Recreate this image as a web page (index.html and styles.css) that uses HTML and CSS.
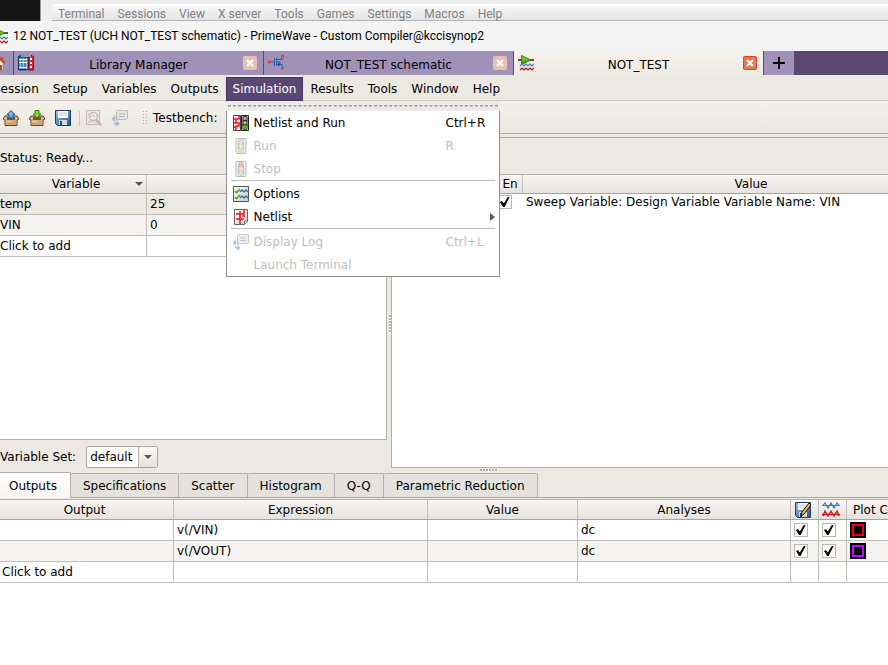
FILE: index.html
```html
<!DOCTYPE html>
<html lang="en">
<head>
<meta charset="utf-8">
<title>12 NOT_TEST (UCH NOT_TEST schematic) - PrimeWave - Custom Compiler@kccisynop2</title>
<link rel="stylesheet" href="styles.css">
</head>
<body>
<svg class="defs" aria-hidden="true">
  <defs>
    <linearGradient id="blue" x1="0" y1="0" x2="1" y2="1"><stop offset="0" stop-color="#9cc6ec"/><stop offset="1" stop-color="#245086"/></linearGradient>
    <linearGradient id="green" x1="0" y1="0" x2="0" y2="1"><stop offset="0" stop-color="#9be04a"/><stop offset="1" stop-color="#3d8a00"/></linearGradient>
    <linearGradient id="page" x1="0" y1="0" x2="1" y2="1"><stop offset="0" stop-color="#fff"/><stop offset="1" stop-color="#c9cbc8"/></linearGradient>
    <symbol id="wave" viewBox="0 0 16 16">
      <path d="M0 5h4M12 5h4" stroke="#222" stroke-width="1.5"/>
      <path d="M3.5 .5v9L13 5z" fill="url(#green)" stroke="#3a7a08"/>
      <path d="M2 11l2-2 2 2 2-2 2 2 2-2 2 2 2-2" fill="none" stroke="#4378ad" stroke-width="1.2"/>
      <path d="M2 15l2-2 2 2 2-2 2 2 2-2 2 2 2-2" fill="none" stroke="#c40d0d" stroke-width="1.2"/>
    </symbol>
    <symbol id="box" viewBox="0 0 16 16">
      <path d="M2 6h12l2 3-2 1v5.5H2V10L0 9z" fill="#d8b487" stroke="#5d4220"/>
      <path d="M4 7h8v3H4z" fill="#76542d"/><path d="M2.500 10.500h11v4h-11z" fill="#cda574"/><path d="M3 11.500h6" stroke="#eed5b3"/>
    </symbol>
    <symbol id="light" viewBox="0 0 16 16">
      <rect x="3" y=".5" width="10" height="15" rx="1" fill="#d6d7cf" stroke="#555"/>
      <rect x="5" y="1.500" width="6" height="13" rx="2" fill="#666"/>
      <circle cx="8" cy="4" r="2" fill="#d7b0a4"/><circle cx="8" cy="8" r="2" fill="#d9c7a2"/><circle cx="8" cy="12" r="2" fill="#bdc7b4"/>
    </symbol>
    <symbol id="log" viewBox="0 0 16 16">
      <path d="M4.500 1.500l1-1h10v8l-1 1h-10z" fill="#d5d8d8" stroke="#777"/>
      <path d="M7 4h6M7 6.500h6" stroke="#4873a8"/>
      <path d="M5 8.500H.8M3 6L.5 8.500 3 11M2 13.500h5M5 10.500v5M3 13l2 2.500 2-2.500" fill="none" stroke="#356fb5" stroke-width="1.3"/>
    </symbol>
    <symbol id="disk" viewBox="0 0 16 16">
      <path d="M.5 .5h15v15h-13l-2-2z" fill="url(#blue)" stroke="#183d68"/>
      <path d="M3 1h10v7H3z" fill="#f6f7f8"/><path d="M4 3h8M4 5h8" stroke="#c8d0d8"/>
      <path d="M4 10h8v5H4z" fill="#d9dadb"/><path d="M5 11h2v4H5z" fill="#254a77"/>
    </symbol>
    <symbol id="close" viewBox="0 0 14 14">
      <rect x=".5" y=".5" width="13" height="13" rx="1" fill="#e07d55" stroke="#d93f2b"/>
      <path d="M4 4l6 6M10 4l-6 6" stroke="#fff" stroke-width="2.200"/>
    </symbol>
    <symbol id="close-dim" viewBox="0 0 14 14">
      <rect x=".5" y=".5" width="13" height="13" rx="1" fill="#e3c1b6" stroke="#f0bcb0"/>
      <path d="M4 4l6 6M10 4l-6 6" stroke="#fff" stroke-width="2.200"/>
    </symbol>
    <symbol id="pulses" viewBox="0 0 18 16">
      <path d="M1 3.500l2-2.500 3 5 3-5 3 5 3-5 2 2.500M0 3.500h18" fill="none" stroke="#417ca3" stroke-width="1.2"/>
      <path d="M1 14l2-5 3 5 3-5 3 5 3-5 2 5M0 12.500h18" fill="none" stroke="#d01919" stroke-width="1.300"/>
    </symbol>
  </defs>
</svg>

<header class="terminal">
  <div class="screen"></div>
  <nav class="terminal-menu">
    <a href="#">Terminal</a><a href="#">Sessions</a><a href="#">View</a><a href="#">X server</a><a href="#">Tools</a><a href="#">Games</a><a href="#">Settings</a><a href="#">Macros</a><a href="#">Help</a>
  </nav>
</header>

<div class="window">
  <div class="title"><svg class="icon"><use href="#wave"/></svg><span>12 NOT_TEST (UCH NOT_TEST schematic) - PrimeWave - Custom Compiler@kccisynop2</span></div>

  <div class="doc-tabs">
    <div class="doc-tab home"><svg class="icon" viewBox="0 0 16 16"><path d="M3 8v7.500h10V8L8 3z" fill="#fff" stroke="#a08878"/><path d="M1 8l7-6 7 6M12 2v4" fill="none" stroke="#d34a22" stroke-width="2.500"/><path d="M9 10h3v5H9z" fill="#9b5532"/></svg></div>
    <div class="doc-tab">
      <svg class="icon" viewBox="0 0 16 16"><path d="M.5 1.500l2-1h8v13l-2 1.500H.5z" fill="#174f78" stroke="#173654"/><path d="M11 1l3-.5 1.500 1.500v13H10z" fill="#d12735" stroke="#6e1620"/><path d="M2.500 3v11M5.500 3v11M8.500 3v11" stroke="#8fc0dd" stroke-width="2"/><path d="M1 4.500h8M1 7.500h8M1 12.500h8" stroke="#fff"/><path d="M3 1h10" stroke="#e8f0f4"/><path d="M13 3v11" stroke="#fff" stroke-width="2" stroke-dasharray="2 2"/></svg>
      <button class="doc-name">Library Manager</button><button class="close" aria-label="Close"><svg><use href="#close-dim"/></svg></button>
    </div>
    <div class="doc-tab">
      <svg class="icon" viewBox="0 0 16 16"><path d="M2 7h4M6.500 3v8M8.500 3v8M9 4.500h5V2M9 9.500h5V13M9 7h3v3" fill="none" stroke="#275f9d"/><path d="M10 7.500l3 2-3 2z" fill="#174f90"/><g fill="#ef9a9a" stroke="#d11717"><circle cx="1.500" cy="7" r="1"/><circle cx="14.500" cy="1.500" r="1"/><circle cx="14.500" cy="13.500" r="1"/></g></svg>
      <button class="doc-name">NOT_TEST schematic</button><button class="close" aria-label="Close"><svg><use href="#close-dim"/></svg></button>
    </div>
    <div class="doc-tab active">
      <svg class="icon"><use href="#wave"/></svg>
      <button class="doc-name">NOT_TEST</button><button class="close" aria-label="Close"><svg><use href="#close"/></svg></button>
    </div>
    <button class="new-tab" aria-label="New tab"><svg viewBox="0 0 12 12"><path d="M6 0v12M0 6h12" stroke="#000" stroke-width="2"/></svg></button>
  </div>

  <nav class="menubar">
    <button>Session</button><button>Setup</button><button>Variables</button><button>Outputs</button>
    <div class="menu-anchor">
      <button class="open">Simulation</button>
      <div class="menu">
        <div class="tear"></div>
        <div class="menu-items">
          <button><svg class="icon" viewBox="0 0 16 16"><path d="M.5 .5h7v15h-7z" fill="#eee" stroke="#444"/><path d="M6 1v3H3v4h3v3H3v4M1 4h2M1 8h2M1 12h2" fill="none" stroke="#e01b24" stroke-width="1.500"/><path d="M8.500 .5h7v15h-7z" fill="#ccc" stroke="#222"/><rect x="9.500" y="1" width="5" height="14" rx="2" fill="#222"/><circle cx="12" cy="3.500" r="1.800" fill="#d99f8b"/><circle cx="12" cy="7.800" r="1.800" fill="#d8b66b"/><circle cx="12" cy="12.200" r="2.200" fill="#45c600"/></svg><span>Netlist and Run</span><kbd>Ctrl+R</kbd></button>
          <button disabled><svg class="icon" viewBox="0 0 16 16"><use href="#light"/><path d="M5 11h6v3H5z" fill="#76cf36"/></svg><span>Run</span><kbd>R</kbd></button>
          <button disabled><svg class="icon" viewBox="0 0 16 16"><use href="#light"/><circle cx="8" cy="3.500" r="2.500" fill="#ec4545"/></svg><span>Stop</span></button>
          <hr>
          <button><svg class="icon" viewBox="0 0 16 16"><path d="M.5 .5h15v15H.5z" fill="url(#page)" stroke="#555"/><path d="M2 5l1.500 1.500L7 3M2 11l1.500 1.500L7 9" fill="none" stroke="#4aa510" stroke-width="1.600"/><path d="M7 6l2-2 2 2 2-2 2 2M7 12l2-2 2 2 2-2 2 2" fill="none" stroke="#356ba5" stroke-width="1.300"/></svg><span>Options</span></button>
          <button><svg class="icon" viewBox="0 0 16 16"><path d="M1.500 .5h13v12l-3 3h-10z" fill="url(#page)" stroke="#666"/><path d="M11.500 15v-3h3" fill="#eee" stroke="#777"/><path d="M11 1v4H7v5h4M7 10v5M3 5h4M3 10h4M9 7h3M7 2v3" fill="none" stroke="#e01b24" stroke-width="1.500"/></svg><span>Netlist</span><i class="submenu"></i></button>
          <hr>
          <button disabled><svg class="icon"><use href="#log"/></svg><span>Display Log</span><kbd>Ctrl+L</kbd></button>
          <button disabled><i class="icon"></i><span>Launch Terminal</span></button>
        </div>
      </div>
    </div>
    <button>Results</button><button>Tools</button><button>Window</button><button>Help</button>
  </nav>

  <div class="toolbar">
    <button aria-label="Load"><svg class="icon" viewBox="0 0 16 16"><use href="#box"/><path d="M8 .5l4 4h-2V8H6V4.500H4z" fill="#75b3e8" stroke="#245d98"/></svg></button>
    <button aria-label="Store"><svg class="icon" viewBox="0 0 16 16"><use href="#box"/><path d="M8 8l4-4h-2V.5H6V4H4z" fill="#79d33c" stroke="#3b8b0c"/></svg></button>
    <button aria-label="Save"><svg class="icon"><use href="#disk"/></svg></button>
    <span class="divider"></span>
    <button disabled aria-label="Inspect"><svg class="icon" viewBox="0 0 16 16"><path d="M.5 .5h13v14H.5z" fill="#ddd" stroke="#777"/><path d="M2 4h3v8H2M9 2v4h3" fill="none" stroke="#d55"/><circle cx="7.500" cy="6.500" r="4" fill="#eceff3" stroke="#777" stroke-width="1.500"/><path d="M10 10l5 5" stroke="#a55" stroke-width="2.500"/><path d="M5 7l2-2 2 2" stroke="#c55" fill="none"/></svg></button>
    <button disabled aria-label="Log"><svg class="icon"><use href="#log"/></svg></button>
    <span class="grip"></span>
    <span class="bench">Testbench:</span>
  </div>
  <div class="status">Status: Ready...</div>

  <main class="panes">
    <section class="variables">
      <div class="view">
        <table class="grid">
          <colgroup><col class="c-var"><col></colgroup>
          <thead><tr><th><div class="sorted"><span>Variable</span><i class="down"></i></div></th><th></th></tr></thead>
          <tbody>
            <tr class="current"><td>temp</td><td>25</td></tr>
            <tr class="alt"><td>VIN</td><td>0</td></tr>
            <tr><td>Click to add</td><td></td></tr>
          </tbody>
        </table>
      </div>
      <div class="set-row">
        <label for="set">Variable Set:</label>
        <div class="combo"><select id="set"><option>default</option></select><span class="combo-arrow"><i class="down"></i></span></div>
      </div>
    </section>
    <div class="v-split"><i></i></div>
    <section class="analyses">
      <div class="view">
        <table class="grid plain">
          <colgroup><col class="c-name"><col class="c-en"><col class="c-sweep"></colgroup>
          <thead><tr><th></th><th>En</th><th>Value</th></tr></thead>
          <tbody><tr><td></td><td class="tick"><input type="checkbox" checked aria-label="Enabled"></td><td>Sweep Variable: Design Variable Variable Name: VIN</td></tr></tbody>
        </table>
      </div>
      <div class="h-split"><i></i></div>
    </section>
  </main>

  <div class="tabs">
    <button class="selected">Outputs</button><button>Specifications</button><button>Scatter</button><button>Histogram</button><button>Q-Q</button><button>Parametric Reduction</button>
  </div>
  <section class="outputs">
    <table class="grid">
      <colgroup><col class="c-out"><col class="c-expr"><col class="c-val"><col class="c-ana"><col class="c-tick"><col class="c-tick"><col></colgroup>
      <thead><tr><th>Output</th><th>Expression</th><th>Value</th><th>Analyses</th>
        <th class="tool"><svg class="icon" viewBox="0 0 16 16"><use href="#disk"/><path d="M6 14l1-4 7-9 2 2-7 9z" fill="#e9b83d" stroke="#151515"/></svg></th>
        <th class="tool"><svg class="icon wide"><use href="#pulses"/></svg></th><th class="left">Plot Color</th></tr></thead>
      <tbody>
        <tr><td></td><td>v(/VIN)</td><td></td><td>dc</td><td class="tick"><input type="checkbox" checked aria-label="Save VIN"></td><td class="tick"><input type="checkbox" checked aria-label="Plot VIN"></td><td><span class="swatch red"></span></td></tr>
        <tr class="alt"><td></td><td>v(/VOUT)</td><td></td><td>dc</td><td class="tick"><input type="checkbox" checked aria-label="Save VOUT"></td><td class="tick"><input type="checkbox" checked aria-label="Plot VOUT"></td><td><span class="swatch violet"></span></td></tr>
        <tr><td class="add">Click to add</td><td></td><td></td><td></td><td></td><td></td><td></td></tr>
      </tbody>
    </table>
  </section>
</div>
</body>
</html>
```
FILE: styles.css
```css
*, *::before { box-sizing: border-box; }
body {
  margin: 0;
  min-height: 100vh;
  display: flex;
  flex-direction: column;
  overflow: hidden;
  background: #ece9e2;
  color: #000;
  font: 12px/16px "DejaVu Sans", sans-serif;
}
button, select, kbd { font: inherit; color: inherit; }
button { border: 0; padding: 0; background: none; white-space: nowrap; }
.defs { position: absolute; width: 0; height: 0; }
.icon { display: block; flex: none; width: 16px; height: 16px; }
.icon.wide { width: 18px; }

/* outer terminal */
.terminal {
  display: flex;
  height: 21px;
  background: #eee;
}
.screen { width: 41px; background: #141414; border-right: 1px solid #999; }
.terminal-menu {
  flex: 1;
  display: flex;
  gap: 13px;
  margin: 4px 0 0 11px;
  padding-left: 6px;
  border-bottom: 1px solid #b4b4b4;
  background: linear-gradient(#fbfbfb, #e4e4e4);
  font: 12px/20px Roboto, sans-serif;
}
.terminal-menu a { color: #808080; text-decoration: none; white-space: nowrap; }

/* application window; its left edge lies beyond the viewport */
.window { flex: 1; display: flex; flex-direction: column; margin-left: -4px; }
.title {
  display: flex;
  align-items: center;
  gap: 5px;
  height: 30px;
  margin-left: -4px;
  background: #f3f3f3;
  font: 12px/16px Roboto, sans-serif;
  white-space: nowrap;
}

.doc-tabs { display: flex; height: 24px; background: #5a4873; }
.doc-tab {
  flex: 0 1 250px;
  display: flex;
  align-items: center;
  padding: 0 6px 0 4px;
  border-right: 1px solid #5a4873;
  background: #a091b9;
}
.doc-tab.home { flex: 0 0 18px; padding: 0 7px 0 0; justify-content: flex-end; overflow: hidden; }
.doc-tab.active { background: linear-gradient(#f8f2ed, #ece9e2); }
.doc-name { flex: 1; padding: 3px 0 0; }
.close { width: 14px; height: 14px; }
.close svg { display: block; width: 14px; height: 14px; }
.new-tab { width: 30px; background: #a091b9; }
.new-tab svg { display: block; width: 12px; height: 12px; margin: auto; }

.menubar {
  display: flex;
  height: 26px;
  margin-left: -10px;
  padding-top: 2px;
  border-bottom: 1px solid #cfccc5;
}
.menubar > button, .open { height: 24px; padding: 0 7px; }
.menu-anchor { position: relative; }
.open { background: #5a4873; color: #fff; border: 1px solid #453361; padding: 0 6px; }
.menu {
  position: absolute;
  z-index: 2;
  top: 24px;
  left: 0;
  width: 274px;
}
.tear { height: 10px; padding: 4px 2px 0; background: #edebe6; }
.tear::before { content: ""; display: block; height: 2px; border-top: 1px dashed #999; border-bottom: 1px dashed #c4c1ba; }
.menu-items { border: 1px solid #8f8f8f; border-top: 0; background: #fff; }
.menu-items button {
  display: flex;
  align-items: center;
  width: 100%;
  height: 23px;
  padding: 0 4px 0 6px;
  text-align: left;
}
.menu-items span { flex: 1; padding-left: 5px; }
.menu-items kbd { width: 49px; }
.menu-items button:disabled { color: #bebebe; }
button:disabled .icon { opacity: 0.4; }
.menu-items hr { height: 1px; margin: 0 4px 1px; border: 0; background: #bcbcbc; }
.submenu { border: 4px solid transparent; border-left: 5px solid #5c5c5c; border-right: 0; }

.toolbar {
  display: flex;
  align-items: center;
  height: 33px;
  padding: 2px 0 0 7px;
  gap: 10px;
  border-bottom: 1px solid #b2afa9;
  background: linear-gradient(#f5f2ed, #eae7df);
}
.divider { width: 1px; height: 15px; margin: 0 -4px 0 -2px; background: #ccc9c3; }
.grip { width: 6px; height: 16px; margin-left: 4px; background: radial-gradient(circle, #aaa 0 1px, transparent 1px) 0 0 / 3px 3px; }
.bench { margin-left: -5px; }
.status {
  height: 40px;
  margin-top: 3px;
  padding: 12px 4px;
  border-top: 1px solid #a8a5a0;
  margin-bottom: -3px;
}

/* split panes */
.panes { display: grid; grid-template-columns: 391px 4px minmax(0, 1fr); }
.view { background: #fff; border: 1px solid #b3b0aa; overflow: hidden; }
.variables .view { height: 266px; border-left: 0; }
.analyses .view { height: 294px; border-right: 0; }
.set-row { display: flex; align-items: center; gap: 10px; height: 33px; padding-left: 4px; }
.combo {
  display: flex;
  height: 22px;
  border: 1px solid #aaa7a1;
  border-radius: 2px;
  background: #fff;
}
.combo select { appearance: none; width: 51px; padding: 0 3px; border: 0; background: transparent; }
.combo-arrow { display: grid; place-items: center; width: 19px; border-left: 1px solid #b7b4ae; background: linear-gradient(#faf9f7, #e6e3de); }
.down { width: 0; height: 0; border: 4px solid transparent; border-top-color: #555; border-bottom: 0; }
.v-split { display: grid; place-items: center end; }
.v-split i { width: 2px; height: 18px; background: repeating-linear-gradient(#b5b2ac 0 2px, #fff 2px 3px); }
.h-split { height: 5px; padding: 1px 0 0 89px; }
.h-split i { display: block; width: 18px; height: 2px; background: repeating-linear-gradient(90deg, #b5b2ac 0 2px, #fff 2px 3px); }

.grid { width: 100%; table-layout: fixed; border-collapse: separate; border-spacing: 0; }
.grid th, .grid td { padding: 0 3px; white-space: nowrap; overflow: hidden; border-right: 1px solid #c1beb9; }
.grid th {
  height: 19px;
  font-weight: 400;
  border-bottom: 1px solid #a9a29c;
  background: linear-gradient(#f8f5f2, #e6e2de);
}
.grid td { height: 21px; border-bottom: 1px solid #c1beb9; background: #fff; }
.variables td:first-child { padding-left: 4px; }
.grid th:last-child, .grid td:last-child { border-right: 0; }
.grid .alt td { background: #f5f3f0; }
.grid .current td { background: #ece9e2; }
.grid th .icon { margin: 0 auto; }
.grid .tick { padding: 0 3px; }
.grid .tool { padding: 0 5px 0 1px; }
.grid .left { text-align: left; padding-left: 6px; }
.sorted { display: flex; align-items: center; }
.sorted span { flex: 1; padding-left: 18px; }
.c-var { width: 151px; }
.c-name { width: 106px; }
.c-en { width: 25px; }
.c-sweep { width: 456px; }
.plain { width: 587px; }
.plain th { padding: 0; }
.plain td { height: 16px; border: 0; }
.plain .tick { padding: 0; }

input[type="checkbox"] {
  appearance: none;
  display: block;
  width: 14px;
  height: 14px;
  margin: 0;
  border: 1px solid #b9b6b1;
  background: #fff;
}
input:checked::before {
  content: "";
  display: block;
  width: 10px;
  height: 10px;
  margin: 1px;
  background: #000;
  clip-path: polygon(0 50%, 20% 40%, 38% 66%, 78% 0, 96% 0, 46% 100%, 30% 100%);
}

/* results */
.tabs { display: flex; align-items: flex-end; height: 25px; border-bottom: 1px solid #aaa7a1; }
.tabs button {
  height: 24px;
  padding: 0 12px;
  border: 1px solid #b3b0aa;
  border-left: 0;
  border-bottom: 0;
  border-radius: 2px 2px 0 0;
  background: #e5e2dd;
}
.tabs .selected { height: 26px; margin: -1px 0 -1px; padding: 0 13px; background: linear-gradient(#fff, #f7f5f1); }
.outputs { flex: 1; margin-top: 1px; border-top: 1px solid #b3b0aa; background: #fff; }
.outputs th { height: 20px; padding-top: 1px; }
.outputs .add { padding-left: 6px; }
.c-out { width: 178px; }
.c-expr { width: 254px; }
.c-val { width: 150px; }
.c-ana { width: 213px; }
.c-tick { width: 28px; }
.swatch { display: block; width: 16px; height: 16px; padding: 2px; background: #000; }
.swatch::before { content: ""; display: block; height: 12px; border: 2px solid; }
.red::before { border-color: #f00; }
.violet::before { border-color: #b90dff; }
```
